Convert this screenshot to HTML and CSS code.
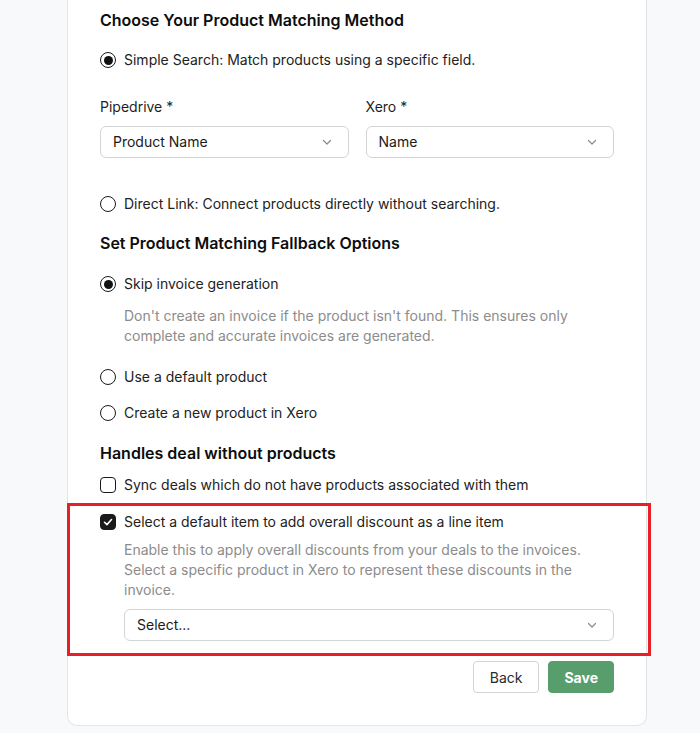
FILE: index.html
```html
<!DOCTYPE html>
<html lang="en">
<head>
    <meta charset="UTF-8">
    <meta name="viewport" content="width=device-width, initial-scale=1.0">
    <title>Product Matching</title>
    <link rel="stylesheet" href="styles.css">
</head>
<body>
    <main class="page">
        <div class="card">
            <h2 class="title">Choose Your Product Matching Method</h2>

            <label class="option gap-head">
                <span class="radio checked"></span>
                Simple Search: Match products using a specific field.
            </label>

            <div class="fields">
                <div class="field">
                    <span class="field-label">Pipedrive *</span>
                    <div class="select">
                        <span>Product Name</span>
                        <svg class="chev" viewBox="0 0 12 12"><path d="M2.5 4.5 6 8l3.5-3.5"/></svg>
                    </div>
                </div>
                <div class="field">
                    <span class="field-label">Xero *</span>
                    <div class="select">
                        <span>Name</span>
                        <svg class="chev" viewBox="0 0 12 12"><path d="M2.5 4.5 6 8l3.5-3.5"/></svg>
                    </div>
                </div>
            </div>

            <label class="option direct">
                <span class="radio"></span>
                Direct Link: Connect products directly without searching.
            </label>

            <h2 class="title title-2">Set Product Matching Fallback Options</h2>

            <label class="option skip">
                <span class="radio checked"></span>
                Skip invoice generation
            </label>
            <p class="hint hint-skip">Don't create an invoice if the product isn't found. This ensures only complete and accurate invoices are generated.</p>

            <label class="option use-default">
                <span class="radio"></span>
                Use a default product
            </label>
            <label class="option create-new">
                <span class="radio"></span>
                Create a new product in Xero
            </label>

            <h2 class="title title-3">Handles deal without products</h2>

            <label class="option sync">
                <span class="check"></span>
                Sync deals which do not have products associated with them
            </label>

            <label class="option discount">
                <span class="check checked">
                    <svg viewBox="0 0 16 16"><path d="M4 8.3 6.8 11 12 5.2"/></svg>
                </span>
                Select a default item to add overall discount as a line item
            </label>
            <p class="hint hint-discount">Enable this to apply overall discounts from your deals to the invoices. Select a specific product in Xero to represent these discounts in the invoice.</p>
            <div class="select select-wide">
                <span>Select...</span>
                <svg class="chev" viewBox="0 0 12 12"><path d="M2.5 4.5 6 8l3.5-3.5"/></svg>
            </div>

            <div class="actions">
                <button class="btn btn-back">Back</button>
                <button class="btn btn-save">Save</button>
            </div>

            <div class="highlight"></div>
        </div>
    </main>
</body>
</html>
```

FILE: styles.css
```css
*{
    margin: 0;
    padding: 0;
    box-sizing: border-box;
}
body{
    background-color: #f8f9fb;
    font-family: Inter, "Noto Sans", sans-serif;
    font-size: 14px;
    line-height: 20px;
    color: #1f1f1f;
}
.page{
    padding-left: 67px;
    width: 647px;
}
.card{
    position: relative;
    background: #fff;
    border: 1px solid #e3e4e6;
    border-top: none;
    border-radius: 0 0 10px 10px;
    padding: 8px 32px 32px 32px;
}
.title{
    font-size: 16px;
    line-height: 24px;
    font-weight: 600;
    color: #0d0d0d;
}
.title-2{
    margin-top: 17px;
}
.title-3{
    margin-top: 18px;
}
.option{
    display: flex;
    align-items: center;
    gap: 8px;
    color: #222;
}
.gap-head{
    margin-top: 18px;
}
.direct{
    margin-top: 36px;
}
.skip{
    margin-top: 19px;
}
.use-default{
    margin-top: 21px;
}
.create-new{
    margin-top: 16px;
}
.sync{
    margin-top: 10px;
}
.discount{
    margin-top: 17px;
}
.radio{
    width: 16px;
    height: 16px;
    border: 1.5px solid #1a1a1a;
    border-radius: 50%;
    display: flex;
    align-items: center;
    justify-content: center;
    flex-shrink: 0;
}
.radio.checked::after{
    content: "";
    width: 9px;
    height: 9px;
    border-radius: 50%;
    background: #111;
}
.check{
    width: 16px;
    height: 16px;
    border: 1.5px solid #1a1a1a;
    border-radius: 4px;
    flex-shrink: 0;
    display: flex;
    align-items: center;
    justify-content: center;
}
.check.checked{
    background: #1a1a1a;
}
.check svg{
    width: 14px;
    height: 14px;
    fill: none;
    stroke: #fff;
    stroke-width: 1.8;
    stroke-linecap: round;
    stroke-linejoin: round;
}
.fields{
    display: flex;
    gap: 17px;
    margin-top: 27px;
}
.field{
    flex: 1;
    display: flex;
    flex-direction: column;
    gap: 9px;
}
.field-label{
    color: #1f1f1f;
}
.select{
    height: 32px;
    border: 1px solid #d3d4d6;
    border-radius: 6px;
    display: flex;
    align-items: center;
    justify-content: space-between;
    padding: 0 15px 0 12px;
    color: #1a1a1a;
    background: #fff;
}
.chev{
    width: 12px;
    height: 12px;
    fill: none;
    stroke: #8a8a8a;
    stroke-width: 1.2;
    stroke-linecap: round;
    stroke-linejoin: round;
}
.hint{
    color: #8c8c8c;
    padding-left: 24px;
}
.hint-skip{
    margin-top: 12px;
}
.hint-discount{
    margin-top: 8px;
}
.select-wide{
    margin-top: 9px;
    margin-left: 24px;
}
.actions{
    display: flex;
    justify-content: flex-end;
    gap: 9px;
    margin-top: 20px;
}
.btn{
    height: 32px;
    padding: 0 16px;
    border-radius: 4px;
    font-family: Inter, "Noto Sans", sans-serif;
    font-size: 14px;
}
.btn-back{
    background: #fff;
    border: 1px solid #d3d4d6;
    color: #2a2a2a;
}
.btn-save{
    padding: 0 15px;
    background: #589e6d;
    border: 1px solid #589e6d;
    color: #fff;
    font-weight: 700;
}
.highlight{
    position: absolute;
    left: -1px;
    top: 503px;
    width: 584px;
    height: 153px;
    border: 3px solid #e81f26;
    pointer-events: none;
}
```
